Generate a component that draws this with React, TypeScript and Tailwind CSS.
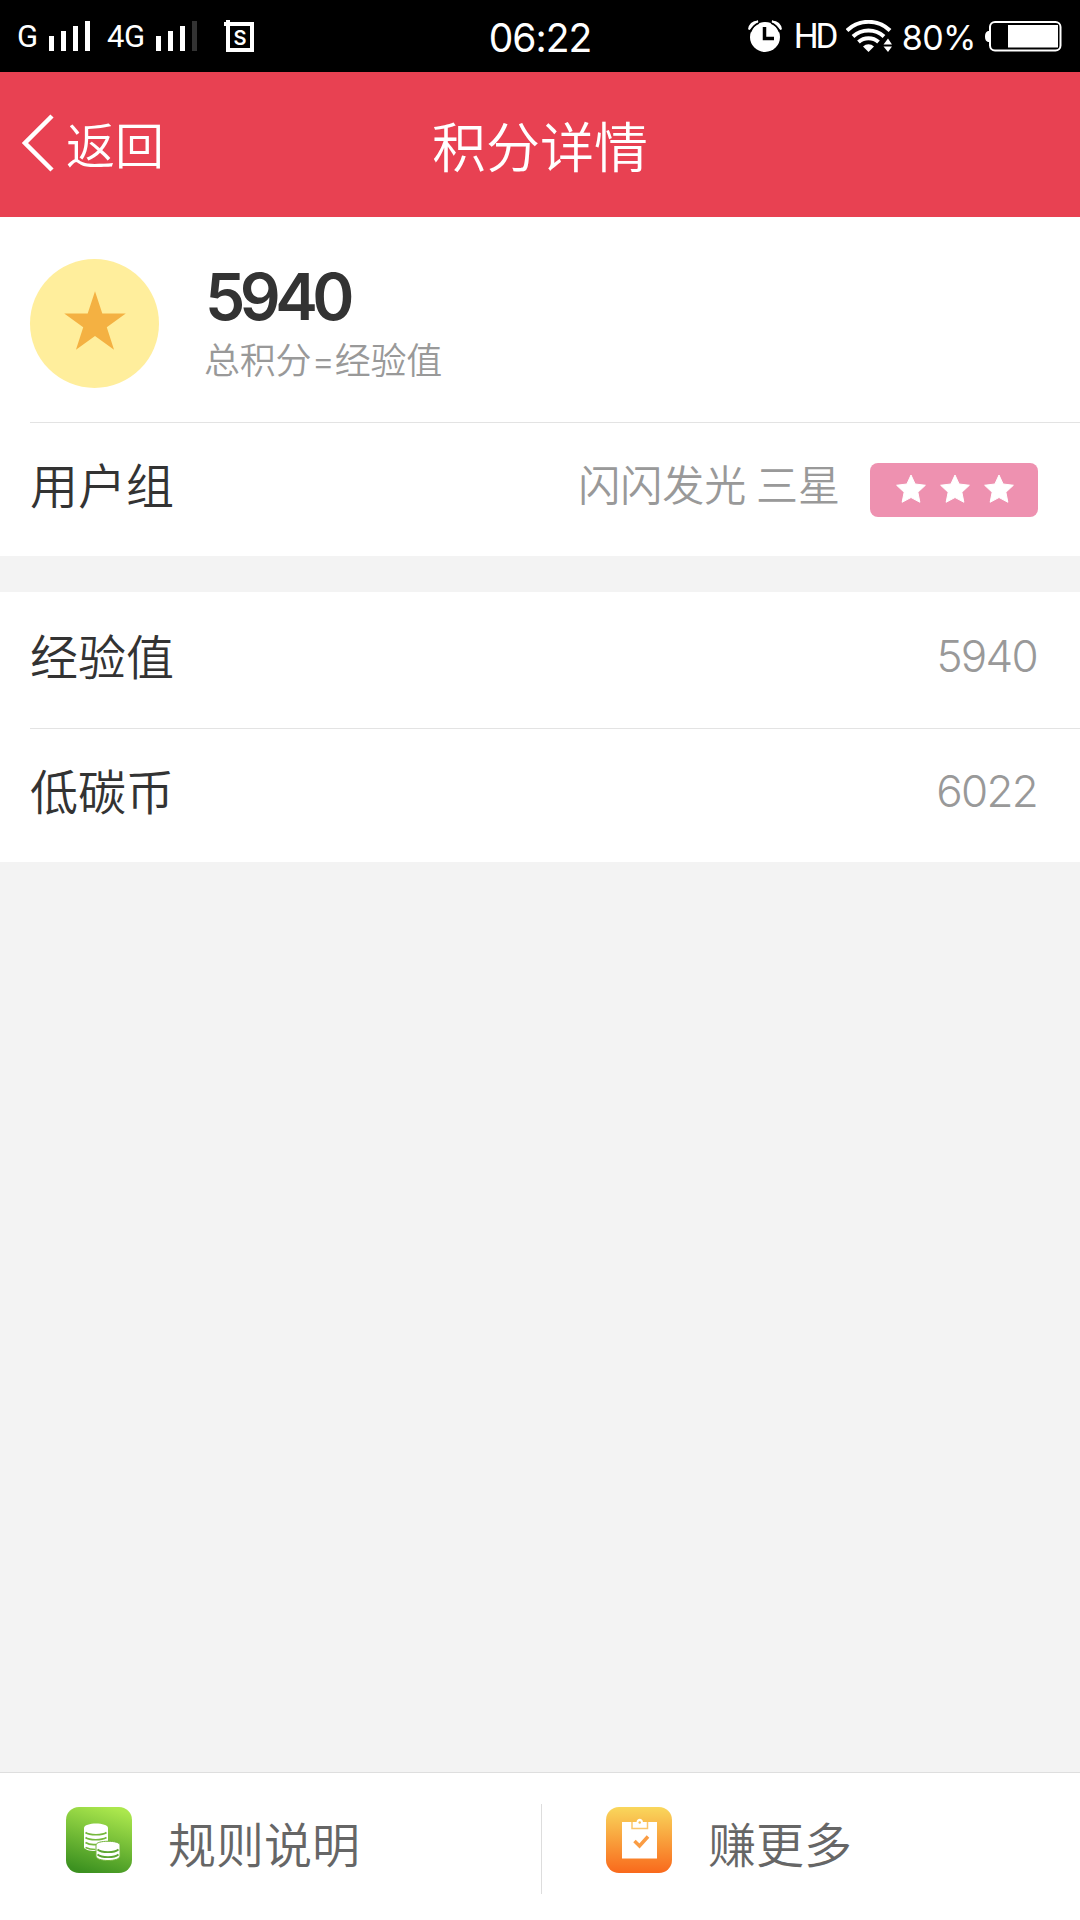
import React from 'react';

interface RowProps {
  label: string;
  value: string;
}

const STAR = 'M12 0l2.83 8.63h9.08l-7.35 5.33 2.81 8.63L12 17.26l-7.37 5.33 2.81-8.63L.09 8.63h9.08z';

const Signal = ({ weak = false }: { weak?: boolean }) => (
  <svg width="42" height="30" viewBox="0 0 42 30" fill="#fff" className="shrink-0">
    <rect x="0" y="15" width="5" height="15" />
    <rect x="12" y="10" width="5" height="20" />
    <rect x="24" y="5" width="5" height="25" />
    <rect x="36" y="0" width="5" height="30" fill={weak ? '#333' : '#fff'} />
  </svg>
);

const StatusBar = () => (
  <div className="grid grid-cols-3 items-center h-[72px] bg-black text-white leading-none">
    <div className="flex items-center pl-[17px]">
      <span className="w-8 font-[Roboto] text-[31px]">G</span>
      <Signal />
      <span className="ml-[16px] w-[49px] whitespace-nowrap font-[Roboto] text-[31px] tracking-[-0.5px]">4G</span>
      <Signal weak />
      <svg width="30" height="32" viewBox="0 0 30 32" fill="none" className="ml-[26px]">
        <path d="M4 4h24v26H4z" stroke="#fff" strokeWidth="4" />
        <path d="M0 2h6v4H0z" fill="#fff" />
        <path d="M2 0h4v6H2z" fill="#fff" />
        <text x="16" y="24.5" fill="#fff" fontSize="20" fontWeight="600" textAnchor="middle">S</text>
      </svg>
    </div>
    <span className="pt-[3px] text-center text-[39px] tracking-[-1px]">06:22</span>
    <div className="flex items-center justify-end pr-[18px]">
      <svg width="34" height="32" viewBox="0 0 34 32" fill="none" className="shrink-0">
        <circle cx="17" cy="17" r="15" fill="#fff" />
        <path d="M1 9.5Q2 2 10 1.500Q4.500 4 1 9.500zM33 9.500Q32 2 24 1.500Q29.500 4 33 9.500z" stroke="#fff" strokeWidth="2" fill="#fff" />
        <path d="M2.500 12A15 15 0 0 1 11 3M31.500 12A15 15 0 0 0 23 3" stroke="#000" strokeWidth="1.500" />
        <path d="M16.500 7v11.500H26" stroke="#000" strokeWidth="3.500" />
      </svg>
      <span className="ml-[12px] w-[43px] whitespace-nowrap font-[Roboto] text-[35px] tracking-[-3px]">HD</span>
      <svg width="46" height="32" viewBox="0 0 46 32" fill="none" className="ml-[9px] shrink-0">
        <path d="M1 10.500A31 31 0 0 1 44 10.500" stroke="#fff" strokeWidth="4" />
        <path d="M7 16.500A23 23 0 0 1 38 16.500" stroke="#fff" strokeWidth="4" />
        <path d="M12.500 22A15 15 0 0 1 32.500 22" stroke="#fff" strokeWidth="4" />
        <path d="M17 26.500a8 8 0 0 1 11 0L22.500 32z" fill="#fff" />
        <path d="M37.500 24.500L42 18.500l4 6zM37.500 26.500h8.500L42 32z" fill="#fff" />
      </svg>
      <span className="ml-[10px] pt-[3px] text-[34px] tracking-[-0.5px]">80%</span>
      <svg width="78" height="31" viewBox="0 0 78 31" fill="none" className="ml-[8px] shrink-0">
        <path d="M5 10v11C2 21 1 18.500 1 15.500S2 10 5 10z" fill="#fff" />
        <rect x="6" y="1" width="70.500" height="28.500" rx="5" stroke="#fff" strokeWidth="2" />
        <rect x="24" y="4" width="50" height="22.500" fill="#fff" />
      </svg>
    </div>
  </div>
);

const Header = () => (
  <header className="grid grid-cols-3 items-center h-[145px] bg-[#e84152] text-white leading-none">
    <button className="flex items-center pl-[22px] pt-[2px]">
      <svg width="32" height="58" viewBox="0 0 32 58" fill="none" className="mb-[6px]">
        <path d="M30 2L3 29l27 27" stroke="#fff" strokeWidth="4.500" />
      </svg>
      <span className="ml-[12px] mt-[2px] text-[49px] font-[350]">返回</span>
    </button>
    <h1 className="pt-[9px] text-center text-[54px] font-[350]">积分详情</h1>
  </header>
);

const Row: React.FC<RowProps> = ({ label, value }) => (
  <div className="flex items-center justify-between h-[134px] pr-[43px] pb-[4px]">
    <span className="mb-[2px] text-[48px] font-[350] text-[#333]">{label}</span>
    <span className="mb-[6px] text-[44px] font-light tracking-[-1.7px] text-[#999]">{value}</span>
  </div>
);

const CoinsIcon = () => (
  <svg width="66" height="66" viewBox="0 0 66 66" className="shrink-0">
    <defs>
      <linearGradient id="green" x1="0.65" y1="0" x2="0.35" y2="1">
        <stop offset="0" stopColor="#abe74d" />
        <stop offset="1" stopColor="#3c9120" />
      </linearGradient>
    </defs>
    <rect width="66" height="66" rx="13" fill="url(#green)" />
    <path d="M18 21c0-6 24-6 24 0v13L30 44c-7 0-12-1.500-12-4z" fill="#fff" />
    <path d="M19.500 25.500c4 3 17 3 21 0M19.500 30.500c4 3 16 3 21 0M19.500 35.500c3 2 7 2.500 11 2M19.500 40.500c3 1.500 6 2 10 2" stroke="#76b83c" strokeWidth="1.700" fill="none" />
    <path d="M30 38c0-5 24-5 24 0v11c0 6-24 6-24 0z" fill="#fff" stroke="#72b43a" strokeWidth="1" />
    <path d="M31.500 42.500c4 3.500 17 3.500 21 0M31.500 47.500c4 3.500 17 3.500 21 0" stroke="#5da632" strokeWidth="1.700" fill="none" />
  </svg>
);

const TaskIcon = () => (
  <svg width="66" height="66" viewBox="0 0 66 66" className="shrink-0">
    <defs>
      <linearGradient id="orange" x1="0" y1="0" x2="0" y2="1">
        <stop offset="0" stopColor="#f9d75c" />
        <stop offset="1" stopColor="#f9691c" />
      </linearGradient>
    </defs>
    <rect width="66" height="66" rx="13" fill="url(#orange)" />
    <path d="M16 15h35v36.500H16z" fill="#fff" />
    <path d="M26 15v6.500h15.500V15" fill="#fff" stroke="#fbc66b" strokeWidth="1.500" />
    <path d="M27.500 19v-3.500h3c0-5 6.500-5 6.500 0h3V19z" fill="#fff" />
    <circle cx="33.700" cy="15.500" r="1.200" fill="#f9c056" />
    <path d="M28.500 34l5 5L42 29.500" stroke="#fa9c43" strokeWidth="3.500" fill="none" />
  </svg>
);

const App = () => (
  <div className="flex flex-col w-[1080px] h-[1920px] overflow-hidden bg-[#f3f3f3] font-[Inter,'Noto_Sans_CJK_SC',sans-serif] leading-none">
    <StatusBar />
    <Header />

    <section className="h-[339px] bg-white pl-[30px]">
      <div className="flex items-center h-[206px] pt-[7px] border-b border-[#e3e3e3]">
        <div className="flex items-center justify-center size-[129px] rounded-full bg-[#ffee9c]">
          <svg width="62" height="59" viewBox="0 0 24 22.6" className="mb-[6px]">
            <path d={STAR} fill="#f4b142" />
          </svg>
        </div>
        <div className="ml-[46px] mb-[2px]">
          <p className="text-[64px] font-semibold tracking-[-5.5px] text-[#333]">5940</p>
          <p className="mt-[14px] -ml-px text-[36px] font-[350] tracking-[-0.2px] text-[#999]">总积分=经验值</p>
        </div>
      </div>
      <div className="flex items-center h-[133px] pr-[42px]">
        <span className="mb-[6px] text-[48px] font-[350] text-[#333]">用户组</span>
        <span className="mb-[8px] ml-auto text-[42px] font-[350] [word-spacing:-2px] text-[#999]">闪闪发光 三星</span>
        <span className="flex items-center justify-center gap-[14px] w-[168px] h-[54px] ml-[30px] pl-[2px] rounded-lg bg-[#ee91b0]">
          {[1, 2, 3].map((n) => (
            <svg key={n} width="30" height="29" viewBox="0 0 24 22.6" overflow="visible" className="mb-[2px]">
              <path d="M12 .5l3.300 7.200 8.200 1-6 5.600 1.600 8L12 18.500l-7.100 3.800 1.600-8-6-5.600 8.200-1z" fill="#fff" stroke="#fff" strokeWidth="0.8" />
            </svg>
          ))}
        </span>
      </div>
    </section>

    <section className="h-[270px] mt-9 bg-white pl-[30px]">
      <div className="pt-[2px]">
        <Row label="经验值" value="5940" />
      </div>
      <div className="h-px bg-[#e3e3e3]" />
      <Row label="低碳币" value="6022" />
    </section>

    <footer className="flex h-[148px] mt-auto border-t border-[#dedede] bg-white text-[48px] font-[350] text-[#666]">
      <button className="flex items-center w-[541px] pl-[66px] pb-[13px]">
        <CoinsIcon />
        <span className="ml-[36px] mt-[12px]">规则说明</span>
      </button>
      <div className="w-px h-[90px] mt-[31px] bg-[#ddd]" />
      <button className="flex items-center pl-[64px] pb-[13px]">
        <TaskIcon />
        <span className="ml-[36px] mt-[12px]">赚更多</span>
      </button>
    </footer>
  </div>
);

export default App;
